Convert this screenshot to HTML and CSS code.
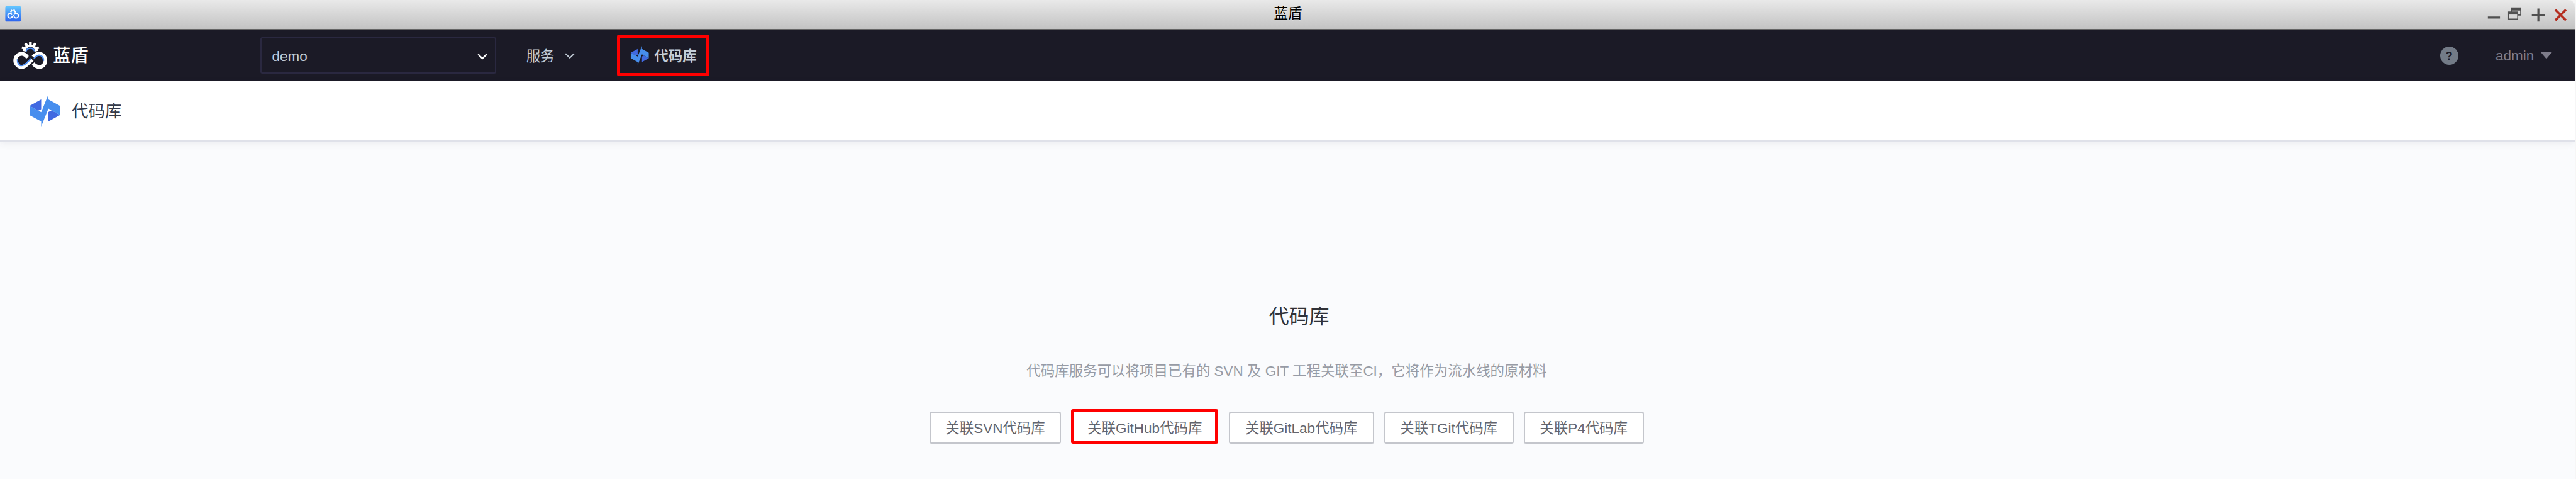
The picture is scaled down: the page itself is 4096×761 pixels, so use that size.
FILE: index.html
```html
<!DOCTYPE html>
<html lang="zh-CN">
<head>
<meta charset="utf-8">
<title>蓝盾</title>
<link rel="stylesheet" href="styles.css">
</head>
<body>
<svg class="defs" width="0" height="0" aria-hidden="true">
  <symbol id="code" viewBox="174 561 180 192">
    <path fill="#4169e1" d="M243 591 174 629 225 658 243 649ZM286 722 354 684 305 655 286 666Z"/>
    <path fill="#478eee" d="M174 629 243 667 286 561V591L354 629V684L286 645 243 752V722L174 684Z"/>
  </symbol>
  <symbol id="gear" viewBox="78 248 204 164">
    <g fill="currentColor">
      <path d="M134 303A47 47 0 0 1 226 303L208 308A28 28 0 0 0 152 308Z"/>
      <rect id="tooth" x="172" y="249" width="16" height="20" rx="2"/>
      <rect x="172" y="249" width="16" height="20" rx="2" transform="rotate(34 180 303)"/>
      <rect x="172" y="249" width="16" height="20" rx="2" transform="rotate(68 180 303)"/>
      <rect x="172" y="249" width="16" height="20" rx="2" transform="rotate(-34 180 303)"/>
      <rect x="172" y="249" width="16" height="20" rx="2" transform="rotate(-68 180 303)"/>
    </g>
    <g fill="none" stroke="currentColor" stroke-width="22">
      <path d="M164 343C152 326 140 321 129 321A39 39 0 0 0 129 399C141 399 148 394 156 387L192 354"/>
      <path d="M196 339C208 326 219 321 231 321A39 39 0 0 1 231 399C217 399 207 391 196 379"/>
    </g>
  </symbol>
</svg>

<div class="window">
  <header class="titlebar">
    <div class="side">
      <svg class="app-icon" viewBox="0 0 32 32">
        <defs><linearGradient id="sky" x1="0" y1="0" x2="0" y2="1"><stop offset="0" stop-color="#65c8ff"/><stop offset="1" stop-color="#2b62ee"/></linearGradient></defs>
        <rect x=".5" y=".5" width="31" height="31" rx="3.5" fill="url(#sky)"/>
        <use href="#gear" x="4" y="7" width="24" height="19" color="#fff"/>
      </svg>
    </div>
    <div class="title">蓝盾</div>
    <div class="side controls">
      <svg viewBox="4920 10 170 40" width="170" height="40" fill="none">
        <path fill="#505050" d="M4926 34h24v4h-24zM4972 16h20v16h-7v-2h5v-8h-16v2h-2zM4966 24h20v16h-20zM5024 18h4v11h11v4h-11v11h-4v-11h-11v-4h11z"/>
        <path fill="#d6d6d6" d="M4968 30h16v8h-16z"/>
        <path stroke="#b42c1e" stroke-width="4.6" d="M5059.500 20.500 5080.500 41.500M5080.500 20.500 5059.500 41.500"/>
      </svg>
    </div>
  </header>

  <nav class="topnav">
    <div class="brand">
      <svg class="logo" viewBox="78 248 204 164">
        <use href="#gear" x="78" y="248" width="204" height="164" color="#fff"/>
        <g fill="none" stroke="#4e8ff5" stroke-width="8">
          <path d="M155 306A26 25 0 0 1 205 306"/>
          <path d="M103 354C102 376 113 391 129 391 141 391 147 386 154 379L186 347"/>
          <path d="M201 351C212 336 220 329 231 329 247 329 259 341 258 363"/>
        </g>
        <path stroke="#1b1a26" stroke-width="6" d="M170 333 205 362"/>
      </svg>
      <span class="brand-name">蓝盾</span>
    </div>
    <div class="select">
      <span>demo</span>
      <svg class="chev" viewBox="0 0 20 12"><path d="M1.500 1.500 10 9.800 18.500 1.500" fill="none" stroke="#fff" stroke-width="3"/></svg>
    </div>
    <div class="service">
      <span class="cjk">服务</span>
      <svg class="chev" viewBox="0 0 20 12"><path d="M1.500 1.500 10 9.800 18.500 1.500" fill="none" stroke="#c3cdd7" stroke-width="2.500"/></svg>
    </div>
    <div class="current">
      <svg class="current-icon"><use href="#code"/></svg>
      <span class="cjk">代码库</span>
    </div>
    <div class="account">
      <span class="help">?</span>
      <span class="user">admin</span>
      <svg class="caret" viewBox="0 0 22 13"><path fill="#7e7c8a" d="M0 0h22L11 13z"/></svg>
    </div>
  </nav>

  <div class="pagehead">
    <svg class="page-icon"><use href="#code"/></svg>
    <span class="cjk">代码库</span>
  </div>

  <main class="empty">
    <h1>代码库</h1>
    <p>代码库服务可以将项目已有的 SVN 及 GIT 工程关联至CI，它将作为流水线的原材料</p>
    <div class="actions">
      <button class="btn svn">关联SVN代码库</button>
      <button class="btn github">关联GitHub代码库</button>
      <button class="btn gitlab">关联GitLab代码库</button>
      <button class="btn tgit">关联TGit代码库</button>
      <button class="btn p4">关联P4代码库</button>
    </div>
  </main>
</div>
</body>
</html>
```
FILE: styles.css
```css
* { box-sizing: border-box; }
html { background: #f6f6f6; overflow: hidden; }
body {
  margin: 0;
  overflow: hidden;
  font-family: "Liberation Sans", "Noto Sans CJK SC", sans-serif;
}
svg { display: block; flex: none; }
.defs { position: absolute; }

.window {
  zoom: 0.80314;
  width: 5099px;
  height: 948px;
  display: flex;
  flex-direction: column;
  border-right: 1.3px solid #e2e2e2;
  border-top-right-radius: 14px;
  background: #fafbfd;
  overflow: hidden;
  font-size: 28px;
  white-space: nowrap;
}

.titlebar {
  flex: none;
  height: 60px;
  display: flex;
  align-items: center;
  padding: 0 8px 3px 10px;
  border-bottom: 2.5px solid #666;
  background: linear-gradient(#e9e9e9, #c3c3c3);
}
.side { flex: 1; display: flex; }
.app-icon { width: 32px; height: 32px; }
.title { color: #000; line-height: 40px; text-shadow: 0 1px 1px #eee; }
.controls { justify-content: flex-end; padding-top: 2px; }

.topnav {
  flex: none;
  height: 100px;
  display: flex;
  align-items: center;
  padding-left: 26px;
  background: #1b1a26;
  color: #c3cdd7;
}
.cjk { padding-bottom: 3px; }
.brand { width: 490px; display: flex; align-items: center; gap: 11px; }
.logo { width: 68px; height: 54.700px; }
.brand-name { font-size: 35px; font-weight: 500; color: #fff; line-height: 50px; padding-top: 1px; }
.select {
  width: 466px;
  height: 72px;
  display: flex;
  align-items: center;
  justify-content: space-between;
  padding: 4px 15px 0 20px;
  border: 2.5px solid #2a2840;
  border-radius: 4px;
}
.chev { width: 20px; height: 12px; }
.service { width: 240px; padding-left: 60px; display: flex; align-items: center; gap: 20px; }
.current {
  width: 182px;
  height: 82px;
  display: flex;
  align-items: center;
  gap: 10px;
  padding-left: 19px;
  border: 6.3px solid #f00;
  border-radius: 4px;
  font-weight: 700;
}
.current-icon { width: 38px; height: 38px; }
.account { margin-left: auto; display: flex; align-items: center; padding-right: 45px; color: #7e7c8a; }
.user { padding-top: 2px; }
.help {
  width: 36px;
  height: 36px;
  margin-right: 74px;
  border-radius: 50%;
  background: #737b87;
  color: #1b1a26;
  font-size: 23px;
  font-weight: 700;
  line-height: 37px;
  text-align: center;
}
.caret { width: 22px; height: 13px; margin-left: 14px; }

.pagehead {
  flex: none;
  height: 120px;
  display: flex;
  align-items: center;
  gap: 24px;
  padding-left: 58px;
  border-bottom: 2.5px solid #dfe1e9;
  background: #fff;
  box-shadow: 0 4px 14px rgba(60, 70, 90, .08);
  font-size: 33px;
  color: #333a4a;
}
.page-icon { width: 60px; height: 64px; }

.empty { display: flex; flex-direction: column; align-items: center; padding-top: 316px; }
h1 { margin: 0; font-size: 40px; font-weight: 400; line-height: 60px; color: #313238; padding-left: 46px; }
p { margin: 59px 0 0; line-height: 40px; color: #979ba5; padding-right: 3px; }
.actions { display: flex; gap: 20px; margin-top: 59px; padding-right: 3px; }
.btn {
  height: 64px;
  padding: 0 0 4px;
  border: 2.5px solid #c4c6cc;
  border-radius: 4px;
  background: #fff;
  color: #63656e;
  font: inherit;
}
.svn { width: 260px; }
.github { width: 292px; height: 69px; margin-top: -5px; padding-top: 1px; padding-bottom: 0; border: 6.3px solid #f00; }
.gitlab { width: 288px; }
.tgit { width: 256px; }
.p4 { width: 238px; }
```
